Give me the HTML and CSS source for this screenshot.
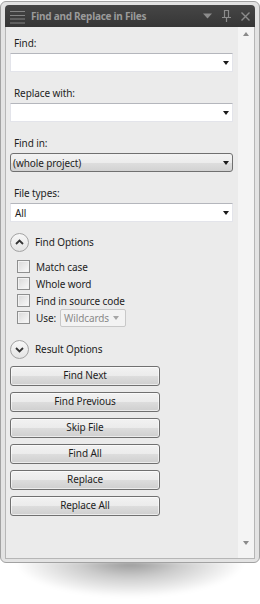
FILE: index.html
```html
<!DOCTYPE html>
<html>
<head>
<meta charset="utf-8">
<link rel="stylesheet" href="styles.css">
</head>
<body>
<div class="window">
  <div class="titlebar">
    <svg class="menu-icon" width="16" height="14" viewBox="0 0 16 14">
      <path d="M0 1.5H15M0 5.5H15M0 9H15M0 13H15" stroke="#858585" stroke-width="1"/>
    </svg>
    <span class="title">Find and Replace in Files</span>
    <div class="title-tools">
      <svg width="9" height="6" viewBox="0 0 9 6"><path d="M0 0.5H9L4.5 5.5Z" fill="#8c8c8c"/></svg>
      <svg width="9" height="12" viewBox="0 0 9 12"><path d="M2.5 0.5H6.5V7.5H2.5Z M0 7.5H9 M4.5 7.5V12" stroke="#8c8c8c" stroke-width="1.2" fill="none"/></svg>
      <svg width="9" height="9" viewBox="0 0 9 9"><path d="M0.5 0.5L8.5 8.5M8.5 0.5L0.5 8.5" stroke="#8c8c8c" stroke-width="1.4"/></svg>
    </div>
  </div>
  <div class="content">
    <div class="main">
      <div class="field">
        <div class="label">Find:</div>
        <div class="input"><span></span><i class="arrow"></i></div>
      </div>
      <div class="field">
        <div class="label">Replace with:</div>
        <div class="input"><span></span><i class="arrow"></i></div>
      </div>
      <div class="field">
        <div class="label">Find in:</div>
        <div class="input select"><span>(whole project)</span><i class="arrow"></i></div>
      </div>
      <div class="field last">
        <div class="label">File types:</div>
        <div class="input"><span>All</span><i class="arrow"></i></div>
      </div>

      <div class="section-head">
        <span class="circle">
          <svg width="19" height="19" viewBox="0 0 19 19"><path d="M6 11L9.5 7.5L13 11" stroke="#333" stroke-width="1.8" fill="none"/></svg>
        </span>
        <span>Find Options</span>
      </div>
      <div class="checks">
        <div class="check-row"><span class="checkbox"></span><span>Match case</span></div>
        <div class="check-row"><span class="checkbox"></span><span>Whole word</span></div>
        <div class="check-row"><span class="checkbox"></span><span>Find in source code</span></div>
        <div class="check-row"><span class="checkbox"></span><span>Use:</span>
          <span class="mini-select"><span>Wildcards</span><i class="arrow grey"></i></span>
        </div>
      </div>

      <div class="section-head result">
        <span class="circle">
          <svg width="19" height="19" viewBox="0 0 19 19"><path d="M6 8L9.5 11.5L13 8" stroke="#333" stroke-width="1.8" fill="none"/></svg>
        </span>
        <span>Result Options</span>
      </div>

      <div class="buttons">
        <div class="btn">Find Next</div>
        <div class="btn">Find Previous</div>
        <div class="btn">Skip File</div>
        <div class="btn">Find All</div>
        <div class="btn">Replace</div>
        <div class="btn">Replace All</div>
      </div>
    </div>
    <div class="scrollbar">
      <i class="sarrow up"></i>
      <i class="sarrow down"></i>
    </div>
  </div>
</div>
<div class="shadow"></div>
</body>
</html>
```

FILE: styles.css
```css
html, body {
  margin: 0;
  padding: 0;
  background: #ffffff;
}
body {
  font-family: "Noto Sans", "Open Sans", sans-serif;
  font-size: 10px;
  color: #1e1e1e;
  width: 260px;
  height: 604px;
  overflow: hidden;
  letter-spacing: -0.1px;
}
.window {
  box-sizing: border-box;
  width: 260px;
  margin-top: 1px;
  border: 1px solid #a2a2a2;
  border-radius: 6px;
  background: #e3e3e3;
  padding: 3px 4px 3px 4px;
  position: relative;
  z-index: 1;
}
.titlebar {
  height: 22px;
  background: linear-gradient(#464646, #363636);
  border-radius: 4px 4px 0 0;
  display: flex;
  align-items: center;
  padding: 0 5px 0 5px;
}
.menu-icon {
  margin-right: 5px;
  margin-top: 1px;
}
.title {
  font-weight: bold;
  color: #9a9a9a;
  letter-spacing: -0.25px;
  flex: 1;
  line-height: 14px;
  margin-top: -1px;
}
.title-tools {
  display: flex;
  align-items: center;
  gap: 10px;
}
.title-tools svg { display: block; }
.content {
  display: flex;
  border: 1px solid #b6b6b6;
  border-top: none;
  background: #ebebeb;
  height: 531px;
}
.main {
  width: 232px;
  padding: 9px 5px 0 4px;
  box-sizing: border-box;
}
.field {
  margin-bottom: 14px;
}
.field.last {
  margin-bottom: 10px;
}
.label {
  line-height: 14px;
  margin-left: 4px;
  margin-bottom: 3px;
}
.input {
  box-sizing: border-box;
  height: 19px;
  background: #ffffff;
  border: 1px solid #e3e4ea;
  border-top-color: #b4b6bc;
  display: flex;
  align-items: center;
  padding: 0 3px 0 4px;
}
.input span {
  flex: 1;
  line-height: 14px;
}
.input.select {
  border: 1px solid #707070;
  border-radius: 3px;
  background: linear-gradient(#f3f3f3 0%, #ececec 50%, #dedede 50%, #d2d2d2 100%);
  padding-left: 2px;
}
.arrow {
  display: block;
  width: 0;
  height: 0;
  border-left: 3.5px solid transparent;
  border-right: 3.5px solid transparent;
  border-top: 4px solid #1a1a1a;
  margin-top: 1px;
}
.arrow.grey {
  border-top-color: #a6a6a6;
}
.section-head {
  height: 20px;
  display: flex;
  align-items: center;
  gap: 6px;
}
.circle {
  box-sizing: border-box;
  width: 19px;
  height: 19px;
  border-radius: 50%;
  border: 1px solid #a3a3a3;
  background: linear-gradient(#f7f7f7, #e4e4e4);
  position: relative;
}
.circle svg {
  position: absolute;
  left: -1px;
  top: -1px;
}
.checks {
  margin-top: 6px;
  padding-left: 7px;
}
.check-row {
  height: 17px;
  display: flex;
  align-items: center;
  gap: 6px;
}
.checkbox {
  box-sizing: border-box;
  width: 13px;
  height: 13px;
  border: 1px solid #8e8f8f;
  background: linear-gradient(135deg, #d8d8d8, #fafafa);
  box-shadow: inset 0 0 0 1px #f2f2f2;
}
.mini-select {
  box-sizing: border-box;
  margin-left: -2px;
  width: 66px;
  height: 18px;
  border: 1px solid #c8c8c8;
  border-radius: 2px;
  background: #f3f3f3;
  color: #8a8a8a;
  display: flex;
  align-items: center;
  padding: 0 6px 0 3px;
}
.mini-select span { flex: 1; }
.section-head.result {
  margin-top: 13px;
}
.buttons {
  margin-top: 7px;
  display: flex;
  flex-direction: column;
  gap: 6px;
}
.btn {
  box-sizing: border-box;
  width: 150px;
  height: 20px;
  border: 1px solid #707070;
  border-radius: 3px;
  background: linear-gradient(#f2f2f2 0%, #ebebeb 50%, #dddddd 50%, #cfcfcf 100%);
  box-shadow: inset 0 0 0 1px rgba(255,255,255,0.6);
  text-align: center;
  line-height: 17px;
}
.scrollbar {
  width: 16px;
  background: #f4f4f4;
  display: flex;
  flex-direction: column;
  justify-content: space-between;
  align-items: center;
  padding: 5px 0 13px 0;
  box-sizing: border-box;
}
.sarrow {
  display: block;
  width: 0;
  height: 0;
  border-left: 3.5px solid transparent;
  border-right: 3.5px solid transparent;
}
.sarrow.up { border-bottom: 4px solid #8a8a8a; }
.sarrow.down { border-top: 4px solid #8a8a8a; }
.shadow {
  width: 230px;
  height: 40px;
  margin: -2px auto 0 auto;
  background: radial-gradient(ellipse 50% 90% at 50% 0%, rgba(0,0,0,0.42) 0%, rgba(0,0,0,0.2) 45%, rgba(0,0,0,0) 100%);
  filter: blur(2px);
}
```
